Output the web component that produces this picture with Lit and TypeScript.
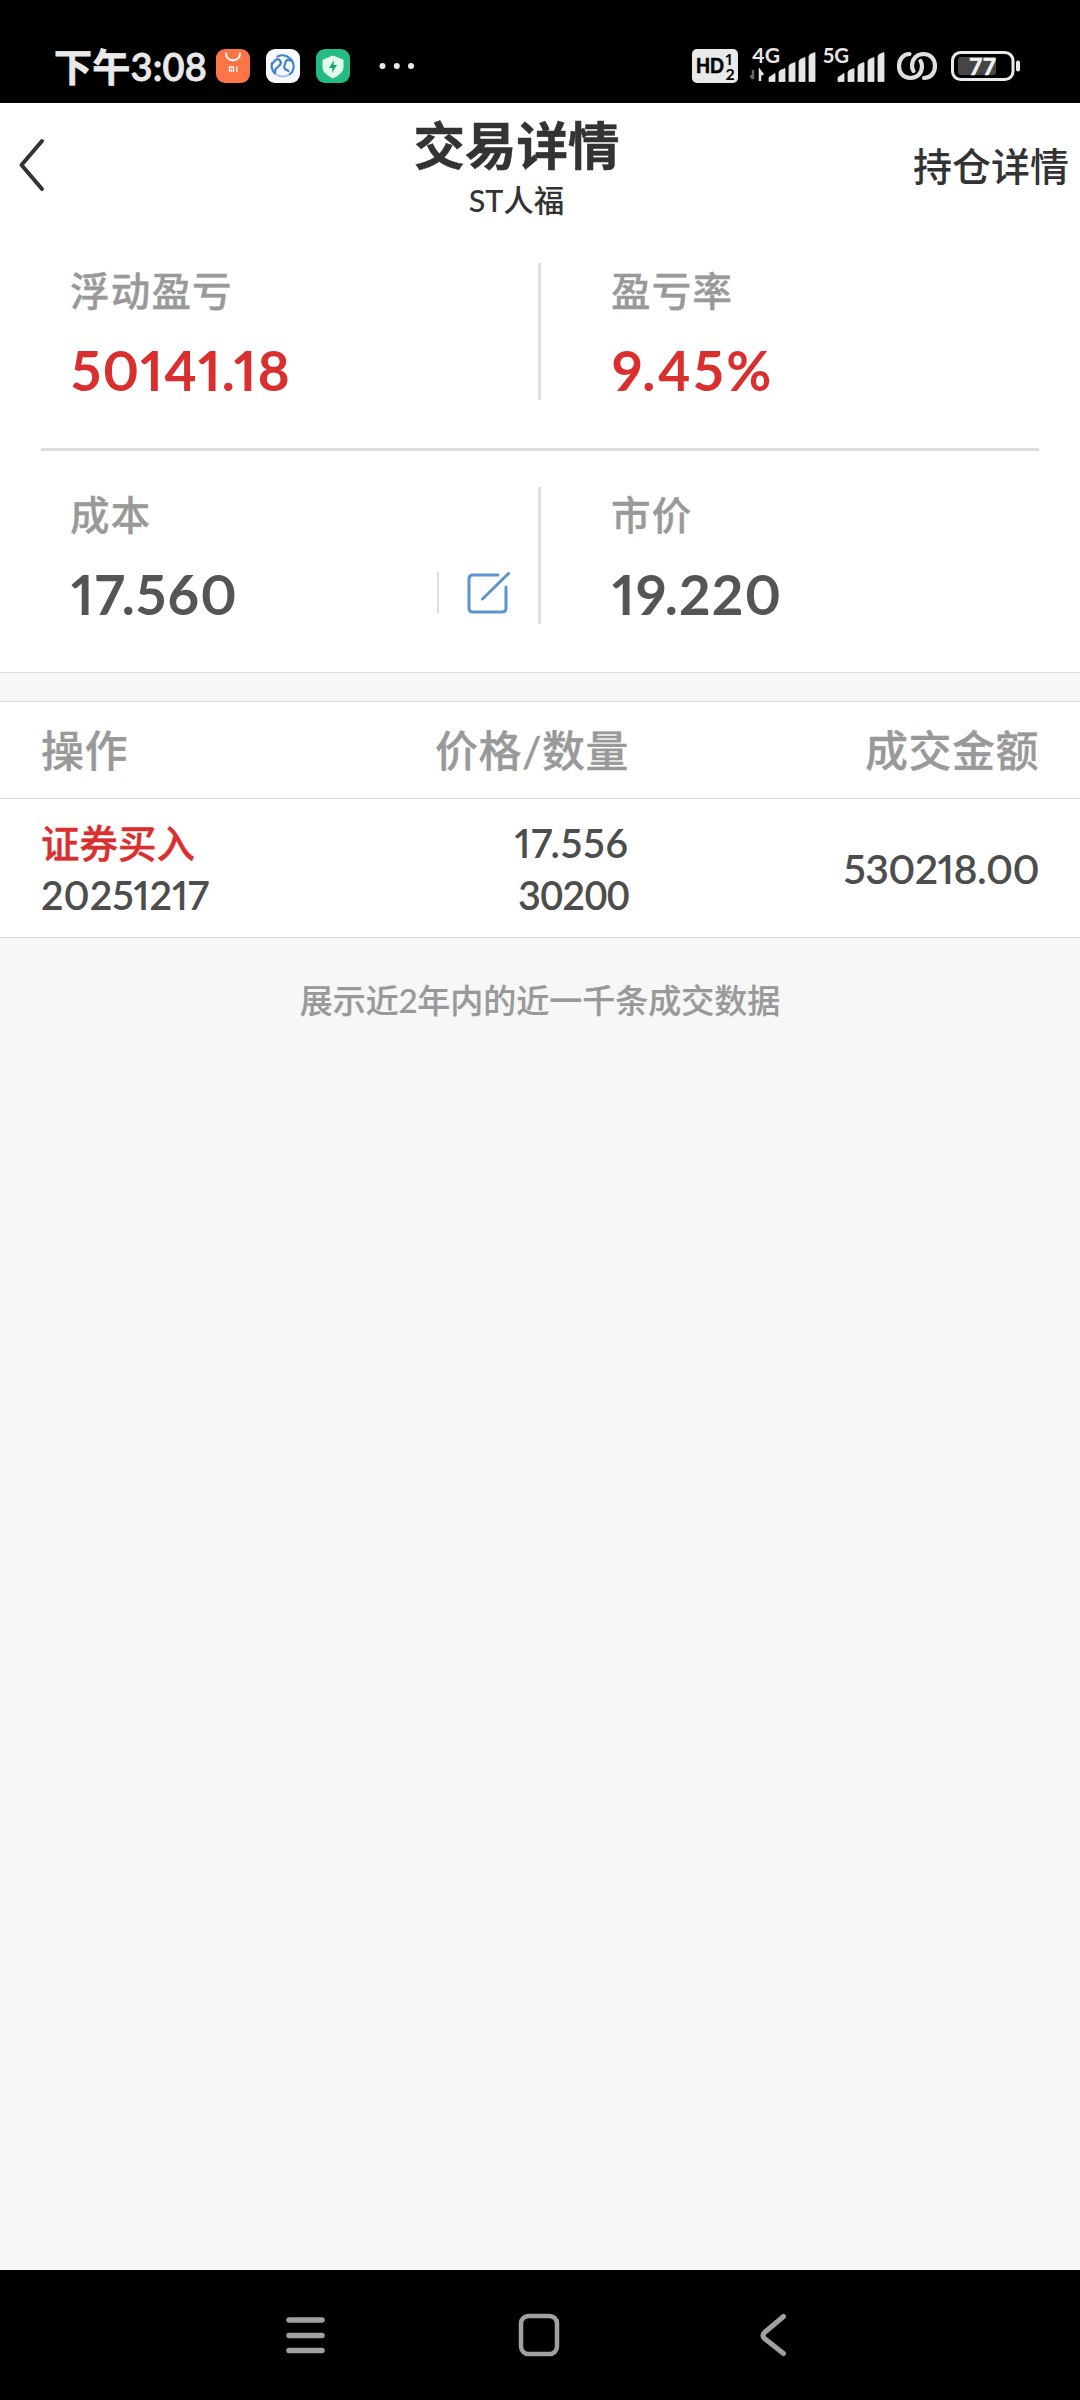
import { LitElement, html, css, svg } from "lit";
import { customElement } from "lit/decorators.js";

const bars = (x: number) => svg`
  <path d="M${x} 33v-4l6-4v8z M${x + 10} 33v-9l1-2 5-2v13z M${x + 20} 33v-15l1-2 5-2v19z M${x + 30} 33v-20l1-2 5-2v24z M${x + 40} 33v-25l1-2 5-2v29z" fill="#e6e6e6" stroke="#e6e6e6" stroke-width=".8" stroke-linejoin="round"/>`;

@customElement("status-bar")
export class StatusBar extends LitElement {
  static styles = css`
    :host {
      display: flex;
      justify-content: space-between;
      height: 103px;
      box-sizing: border-box;
      padding: 35px 56px 0 54px;
      background: #000;
      color: #e9e9e9;
    }
    .left { display: flex; height: 42px; align-items: center; padding-top: 10px; }
    .time { width: 162px; font: 600 38px/42px Lato, "Noto Sans CJK SC", sans-serif; letter-spacing: 0.2px; white-space: nowrap; -webkit-text-stroke: 0.8px #e9e9e9; }
    .apps { display: block; }
    .right { display: block; }
    .t { font-family: Lato, sans-serif; font-weight: 700; }
  `;

  render() {
    return html`
      <div class="left">
        <span class="time">下午3:08</span>
        <svg class="apps" width="206" height="42" viewBox="0 0 206 42">
          <rect x="0" y="4" width="34" height="34" rx="9" fill="#fb7546" />
          <path d="M10 8.500c0 9 14 9 14 0" fill="none" stroke="#fff" stroke-width="2" stroke-linecap="round" />
          <path d="M13.5 27v-5h4v5M15.500 27v-3M20.800 21.500v5.500" fill="none" stroke="#fff" stroke-width="1.300" />
          <rect x="50" y="4" width="34" height="34" rx="9" fill="#f7f9fd" />
          <path d="M74 29a11.200 11.200 0 0 1-13.500.5" fill="none" stroke="#9dbfe8" stroke-width="2" stroke-linecap="round" />
          <path d="M61.500 11.500a11.200 11.200 0 0 1 15.500 13.500q-1 3-3 4M56 18a11.200 11.200 0 0 0 3 10.500" fill="none" stroke="#3f80cf" stroke-width="2.200" stroke-linecap="round" />
          <path d="M56 19l3.500-4q2.500-2 4.500.5t-.5 5l-4 3.500-.5 4M74.500 15.500q-4-1.500-5 1.500 0 2-1 3.500t.5 3.500l3.500 2" fill="none" stroke="#3f80cf" stroke-width="2.200" stroke-linecap="round" stroke-linejoin="round" />
          <rect x="100" y="4" width="34" height="34" rx="9" fill="#23bd84" />
          <path d="M117 11l10 4v7c0 5-4 8-10 11-6-3-10-6-10-11v-7z" fill="#e4fbf0" stroke="#e4fbf0" stroke-linejoin="round" />
          <path d="M118 15l-5 8h3.500l-.5 5 5-8h-3.500z" fill="#17a871" />
          <g fill="#e9e9e9"><circle cx="166.500" cy="21" r="3" /><circle cx="180.800" cy="21" r="3" /><circle cx="195" cy="21" r="3" /></g>
        </svg>
      </div>
      <svg class="right" width="332" height="52" viewBox="0 -10 332 52">
        <rect x="0" y="4" width="46" height="34" rx="5" fill="#e9e9e9" />
        <text class="t" x="4" y="28" font-size="20" font-weight="900" textLength="28" lengthAdjust="spacingAndGlyphs" fill="#000" stroke="#000" stroke-width=".7">HD</text>
        <text class="t" x="33.500" y="20" font-size="16" fill="#000">1</text>
        <text class="t" x="33.500" y="34.500" font-size="16" fill="#000">2</text>
        <text class="t" x="60" y="18" font-size="20" textLength="28" lengthAdjust="spacingAndGlyphs" fill="#e6e6e6">4G</text>
        <path d="M61 25v9M58.500 30.500l2.500 3.500" stroke="#666" stroke-width="2.500" fill="none" />
        <path d="M68 36V26l3 4" stroke="#e6e6e6" stroke-width="2.500" fill="none" />
        <g transform="translate(0 3.500)">${bars(77)}${bars(146)}</g>
        <text class="t" x="131" y="18" font-size="20" textLength="26" lengthAdjust="spacingAndGlyphs" fill="#e6e6e6">5G</text>
        <path d="M217.500 9C211 9 207 14.500 207 21c0 7 4.500 12 11.500 12S230 28 230 21q0-2.500-1.500-5M232 33c7 0 11-5.500 11-12 0-7-4.500-12-11.500-12S220 14 220 21q0 2.500 1.500 5" fill="none" stroke="#e0e0e0" stroke-width="4.200" stroke-linecap="round" />
        <rect x="260.500" y="7.500" width="60.500" height="27" rx="8" fill="none" stroke="#e9e9e9" stroke-width="3" />
        <rect x="266" y="12" width="38" height="18" rx="3" fill="#454545" />
        <text class="t" x="277.500" y="30" font-size="23" textLength="26" fill="#f2f2f2" stroke="#f2f2f2" stroke-width=".6">77</text>
        <path d="M326 17.500v7" stroke="#e9e9e9" stroke-width="4" stroke-linecap="round" />
      </svg>
    `;
  }
}

@customElement("nav-bar")
export class NavBar extends LitElement {
  static styles = css`
    :host {
      display: flex;
      align-items: center;
      height: 130px;
      box-sizing: border-box;
      padding: 0 0 1px 284px;
      background: #000;
    }
    svg { display: block; fill: none; stroke: #a1a1a1; stroke-linecap: round; stroke-linejoin: round; }
    .home { margin: 0 199px 0 191px; }
  `;
  render() {
    return html`
      <svg width="43" height="44" stroke-width="5.5"><path d="M5 7h33M5 22.500h33M5 37.500h33" /></svg>
      <svg class="home" width="42" height="44" stroke-width="4.500"><rect x="3" y="3" width="36" height="38" rx="7.500" /></svg>
      <svg width="28" height="44" stroke-width="5"><path d="M24.500 3.500L5.500 19.500q-3 3 0 6L24.500 40.500" /></svg>
    `;
  }
}

interface Trade {
  action: string;
  date: string;
  price: string;
  quantity: string;
  amount: string;
}

@customElement("app-root")
export class AppRoot extends LitElement {
  static styles = css`
    :host {
      display: flex;
      flex-direction: column;
      width: 1080px;
      height: 2400px;
      background: #f7f7f7;
      color: #333;
      font-family: Lato, "Noto Sans CJK SC", sans-serif;
      font-weight: 500;
      font-variant-numeric: proportional-nums;
      white-space: nowrap;
    }
    .head {
      display: grid;
      grid-template-columns: 1fr auto 1fr;
      height: 123px;
      background: #fff;
    }
    .back { padding: 33px 0 0 15px; }
    .back svg { display: block; }
    .titles { text-align: center; padding: 14px 47px 0 0; }
    .title { font-size: 51.5px; line-height: 56px; font-weight: 700; -webkit-text-stroke: 0.5px #333; }
    .sub { font-size: 30.500px; line-height: 32px; margin-top: 11px; }
    .link { justify-self: end; padding: 41px 11px 0 0; font-size: 39px; line-height: 44px; }

    .summary { background: #fff; height: 446px; border-bottom: 1px solid #ddd; }
    .pair { display: grid; grid-template-columns: 538px 3px 1fr; height: 137px; padding-top: 37px; }
    .pair.second { padding-top: 36px; }
    .rule { background: #dedede; }
    .hr { height: 3px; margin: 48px 41px 0; background: #dedede; }
    .cell { padding-left: 70px; }
    .label { color: #999; font-size: 39.500px; letter-spacing: 1.200px; line-height: 44px; padding-top: 6px; -webkit-text-stroke: 0.3px #999; }
    .value { color: #555; font-size: 55px; font-weight: 700; line-height: 56px; margin-top: 29px; letter-spacing: 1.200px; padding-left: 1px; }
    .value.rate { letter-spacing: 2.600px; }
    .red { color: #d92f2f; }
    .line { display: flex; justify-content: space-between; }
    .edit { display: flex; gap: 28px; margin: 35px 27px 0 0; height: 44px; }
    .tick { width: 2px; height: 41px; background: #dedede; }

    .table { margin-top: 28px; background: #fff; border-top: 1px solid #ddd; border-bottom: 1px solid #ddd; height: 235px; }
    .row { display: grid; grid-template-columns: 278px 310px 410px; padding: 0 41px; }
    .row > :nth-child(n + 2) { text-align: right; }
    .th { height: 96px; border-bottom: 1px solid #ddd; color: #999; font-size: 43px; letter-spacing: 0.500px; line-height: 98px; -webkit-text-stroke: 0.3px #999; }
    .td { height: 139px; align-items: center; color: #4d4d4d; font-size: 38.500px; line-height: 52px; font-weight: 600; }
    .action { font-weight: 500; -webkit-text-stroke: 0.4px #d92f2f; }
    .td .amount { font-size: 41px; letter-spacing: -0.600px; }
    .num { font-size: 39.500px; }
    .price { letter-spacing: 0.900px; }
    .quantity { font-variant-numeric: tabular-nums; letter-spacing: -0.700px; }
    .note { text-align: center; color: #999; font-size: 33px; line-height: 40px; margin-top: 42px; -webkit-text-stroke: 0.2px #999; }
    nav-bar { margin-top: auto; }
  `;

  private trades: Trade[] = [
    { action: "证券买入", date: "20251217", price: "17.556", quantity: "30200", amount: "530218.00" },
  ];

  render() {
    return html`
      <status-bar></status-bar>
      <div class="head">
        <div class="back">
          <svg width="30" height="58" fill="none" stroke="#333" stroke-width="4" stroke-linecap="round" stroke-linejoin="round"><path d="M27 5L6.500 29l20.500 24" /></svg>
        </div>
        <div class="titles">
          <div class="title">交易详情</div>
          <div class="sub">ST人福</div>
        </div>
        <div class="link">持仓详情</div>
      </div>
      <div class="summary">
        <div class="pair">
          <div class="cell"><div class="label">浮动盈亏</div><div class="value red">50141.18</div></div>
          <div class="rule"></div>
          <div class="cell"><div class="label">盈亏率</div><div class="value rate red">9.45%</div></div>
        </div>
        <div class="hr"></div>
        <div class="pair second">
          <div class="cell">
            <div class="label">成本</div>
            <div class="line">
              <div class="value">17.560</div>
              <div class="edit">
                <div class="tick"></div>
                <svg width="44" height="44" fill="none" stroke="#5b94cf" stroke-width="3" stroke-linecap="round" stroke-linejoin="round"><path d="M31 3H6Q2 3 2 7v29q0 4 4 4h29q4 0 4-4V15M15.500 27L41.500 1.500" /></svg>
              </div>
            </div>
          </div>
          <div class="rule"></div>
          <div class="cell"><div class="label">市价</div><div class="value">19.220</div></div>
        </div>
      </div>
      <div class="table">
        <div class="row th"><div>操作</div><div>价格/数量</div><div>成交金额</div></div>
        ${this.trades.map(
          (t) => html`<div class="row td">
            <div><div class="red action">${t.action}</div><div class="num">${t.date}</div></div>
            <div class="num"><div class="price">${t.price}</div><div class="quantity">${t.quantity}</div></div>
            <div class="amount">${t.amount}</div>
          </div>`
        )}
      </div>
      <div class="note">展示近2年内的近一千条成交数据</div>
      <nav-bar></nav-bar>
    `;
  }
}
